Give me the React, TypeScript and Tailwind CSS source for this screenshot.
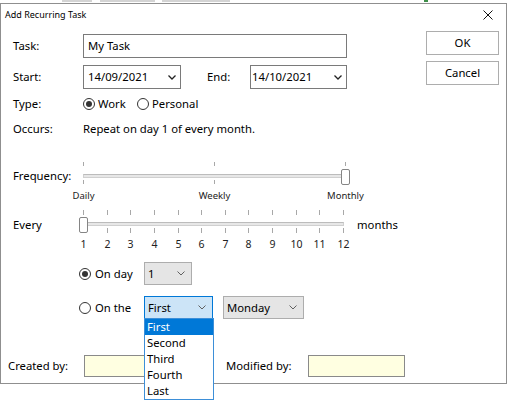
import React from "react";

function Chevron({ dark }: { dark?: boolean }) {
  return (
    <svg width="8" height="5" viewBox="0 0 8 5">
      <polyline
        points="0.5,0.5 4,4 7.5,0.5"
        fill="none"
        stroke={dark ? "#222" : "#606060"}
        strokeWidth={dark ? 1.3 : 1}
      />
    </svg>
  );
}

function Radio({ checked }: { checked?: boolean }) {
  return (
    <span className="w-[12px] h-[12px] rounded-full border border-[#333] flex items-center justify-center bg-white shrink-0">
      {checked && <span className="w-[6px] h-[6px] rounded-full bg-[#333]" />}
    </span>
  );
}

function Slider({
  width,
  positions,
  value,
  bottomSkip,
  labels,
  tickH,
  small,
}: {
  width: number;
  positions: number[];
  value: number;
  bottomSkip: number[];
  labels: string[];
  tickH: number;
  small?: boolean;
}) {
  const xs = positions.map((p) => Math.round(p * width));
  return (
    <div className="relative h-[44px]" style={{ width: width + 1 }}>
      {xs.map((x, i) => (
        <div
          key={"t" + i}
          className="absolute top-[2px] w-[1px] bg-[#a8a8a8]"
          style={{ left: x, height: tickH }}
        />
      ))}
      <div className="absolute top-[14px] left-0 right-0 h-[4px] bg-[#e7e7e7] border border-[#d0d0d0] border-t-[#bcbcbc]" />
      {xs.map((x, i) =>
        bottomSkip.includes(i) ? null : (
          <div
            key={"b" + i}
            className="absolute top-[20px] w-[1px] bg-[#a8a8a8]"
            style={{ left: x, height: tickH }}
          />
        )
      )}
      <div
        className="absolute top-[9px] w-[9px] h-[16px] rounded-[2px] border border-[#858585] bg-white"
        style={{ left: xs[value] - 4 }}
      />
      {labels.map((l, i) => (
        <div
          key={"l" + i}
          className={
            "absolute top-[29px] -translate-x-1/2 leading-[14px] text-[#222] whitespace-nowrap " +
            (small ? "text-[9.5px]" : "text-[10.5px]")
          }
          style={{ left: xs[i] + 0.5 }}
        >
          {l}
        </div>
      ))}
    </div>
  );
}

function Combo({
  text,
  w,
  active,
}: {
  text: string;
  w: string;
  active?: boolean;
}) {
  return (
    <div
      className={
        "h-[23px] border flex items-center justify-between pl-[3px] pr-[6px] " +
        w +
        (active
          ? " bg-[#cce4f7] border-[#0078d7]"
          : " bg-[#e5e5e5] border-[#adadad]")
      }
    >
      <span>{text}</span>
      <Chevron />
    </div>
  );
}

export default function App() {
  const months = Array.from({ length: 12 }, (_, i) => i / 11);
  return (
    <div className="w-[513px] h-[406px] bg-white relative overflow-hidden text-[11.3px] leading-[16px] text-black font-['Noto_Sans',sans-serif]">
      {/* background window glimpse */}
      <div className="h-[3px] relative">
        <div className="absolute left-[62px] top-0 w-[30px] h-[2px] bg-[#d4d4d4]" />
        <div className="absolute left-[100px] top-0 w-[55px] h-[2px] bg-[#d4d4d4]" />
        <div className="absolute left-[162px] top-0 w-[68px] h-[2px] bg-[#d4d4d4]" />
        <div className="absolute left-[424px] top-0 w-[4px] h-[2px] bg-[#3f8f4a]" />
      </div>
      <div className="w-[507px] h-[381px] border border-[#8f8f8f] flex flex-col bg-white">
        {/* title bar */}
        <div className="h-[21px] flex items-center justify-between pl-[4px] pr-[13px]">
          <span className="text-[9px]">Add Recurring Task</span>
          <svg width="10" height="10" viewBox="0 0 10 10">
            <path d="M0.5 0.5 L9.5 9.5 M9.5 0.5 L0.5 9.5" stroke="#111" strokeWidth="1" />
          </svg>
        </div>
        <div className="flex flex-1">
          {/* form */}
          <div className="flex-1 pl-[12px] flex flex-col">
            {/* Task */}
            <div className="mt-[9px] h-[24px] flex items-center">
              <span className="w-[70px]">Task:</span>
              <div className="w-[264px] h-[24px] border border-[#7a7a7a] pl-[4px] flex items-center">
                My Task
              </div>
            </div>
            {/* Start / End */}
            <div className="mt-[7px] h-[24px] flex items-center">
              <span className="w-[70px]">Start:</span>
              <div className="w-[98px] h-[24px] border border-[#7a7a7a] pl-[4px] pr-[4px] flex items-center justify-between">
                <span>14/09/2021</span>
                <Chevron dark />
              </div>
              <span className="ml-[26px] w-[43px]">End:</span>
              <div className="w-[97px] h-[24px] border border-[#7a7a7a] pl-[1px] pr-[4px] flex items-center justify-between">
                <span>14/10/2021</span>
                <Chevron dark />
              </div>
            </div>
            {/* Type */}
            <div className="mt-[7px] h-[16px] flex items-center">
              <span className="w-[70px]">Type:</span>
              <Radio checked />
              <span className="ml-[3px] w-[39px]">Work</span>
              <Radio />
              <span className="ml-[3px]">Personal</span>
            </div>
            {/* Occurs */}
            <div className="mt-[9px] h-[16px] flex items-center">
              <span className="w-[70px]">Occurs:</span>
              <span>Repeat on day 1 of every month.</span>
            </div>
            {/* Frequency */}
            <div className="mt-[23px] flex">
              <span className="w-[70px] pt-[8px]">Frequency:</span>
              <Slider
                width={262}
                positions={[0, 0.5, 1]}
                value={2}
                bottomSkip={[2]}
                labels={["Daily", "Weekly", "Monthly"]}
                tickH={4}
                small
              />
            </div>
            {/* Every */}
            <div className="mt-[4px] flex">
              <span className="w-[70px] pt-[9px]">Every</span>
              <Slider
                width={260}
                positions={months}
                value={0}
                bottomSkip={[0]}
                labels={months.map((_, i) => String(i + 1))}
                tickH={5}
              />
              <span className="ml-[13px] pt-[9px]">months</span>
            </div>
            {/* On day */}
            <div className="mt-[10px] h-[23px] flex items-center">
              <div className="ml-[66px] w-[65px] flex items-center">
                <Radio checked />
                <span className="ml-[4px]">On day</span>
              </div>
              <Combo text="1" w="w-[48px]" />
            </div>
            {/* On the */}
            <div className="mt-[11px] h-[23px] flex items-center">
              <div className="ml-[66px] w-[65px] flex items-center">
                <Radio />
                <span className="ml-[4px]">On the</span>
              </div>
              <div className="relative">
                <Combo text="First" w="w-[69px]" active />
                <div className="absolute left-0 top-[22px] w-[70px] border border-[#3d8fd8] bg-white z-10 flex flex-col">
                  {["First", "Second", "Third", "Fourth", "Last"].map((t, i) => (
                    <div
                      key={t}
                      className={
                        "h-[16px] pl-[2px] leading-[16px] " +
                        (i === 0 ? "bg-[#0078d7] text-white" : "")
                      }
                    >
                      {t}
                    </div>
                  ))}
                </div>
              </div>
              <div className="ml-[10px]">
                <Combo text="Monday" w="w-[81px]" />
              </div>
            </div>
            {/* Created / Modified */}
            <div className="mt-[36px] h-[22px] flex items-center">
              <span className="-ml-[5px] w-[76px]">Created by:</span>
              <div className="w-[97px] h-[22px] border border-[#8a8a8a] bg-[#ffffe1]" />
              <span className="ml-[45px] w-[82px]">Modified by:</span>
              <div className="w-[97px] h-[22px] border border-[#8a8a8a] bg-[#ffffe1]" />
            </div>
          </div>
          {/* buttons */}
          <div className="w-[73px] mr-[7px] mt-[6px] flex flex-col gap-[6px]">
            <div className="h-[24px] border border-[#adadad] bg-white flex items-center justify-center">
              OK
            </div>
            <div className="h-[24px] border border-[#adadad] bg-white flex items-center justify-center">
              Cancel
            </div>
          </div>
        </div>
      </div>
    </div>
  );
}
